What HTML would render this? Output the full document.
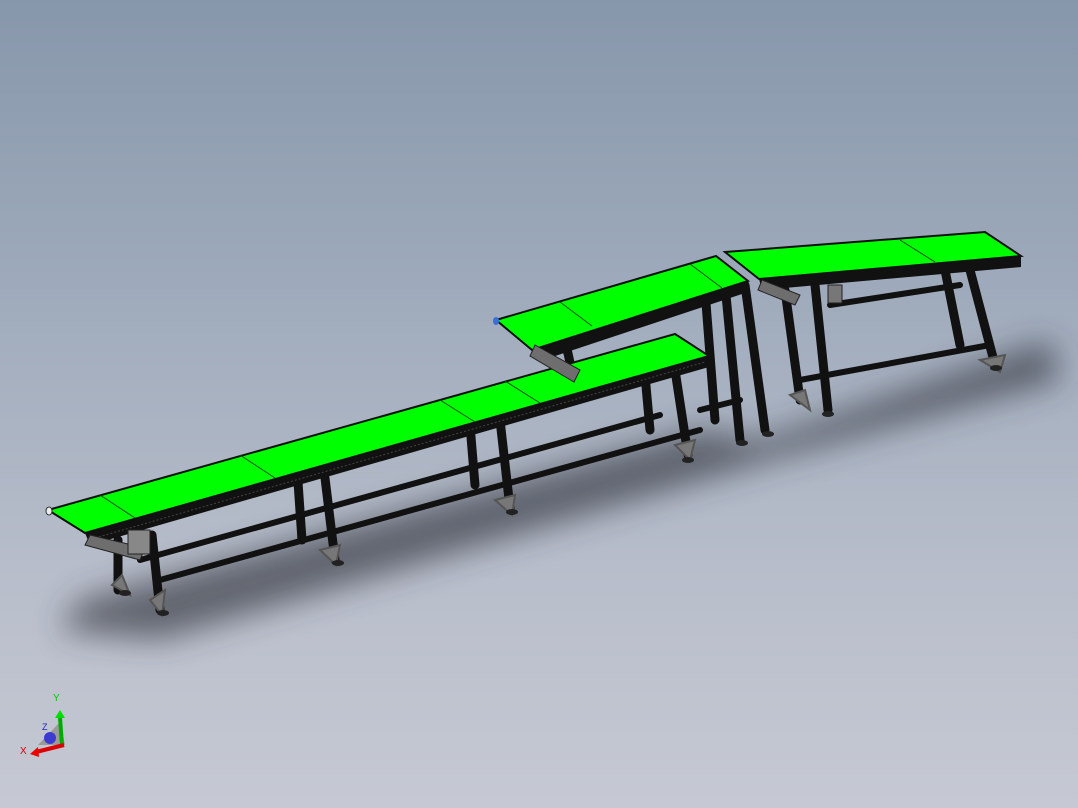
<!DOCTYPE html>
<html><head><meta charset="utf-8"><style>
html,body{margin:0;padding:0;width:1078px;height:808px;overflow:hidden}
body{background:linear-gradient(180deg,#8797ab 0%,#9eaabb 35%,#b7bdca 70%,#c6c9d3 100%)}
</style></head><body>
<svg width="1078" height="808" viewBox="0 0 1078 808" xmlns="http://www.w3.org/2000/svg">
<defs><filter id="b" x="-20%" y="-50%" width="140%" height="200%"><feGaussianBlur stdDeviation="16"/></filter></defs>
<polygon points="80,600 700,430 760,440 1050,340 1060,380 770,460 160,640 60,630" fill="#30343c" opacity="0.65" filter="url(#b)"/>
<g stroke="#111" stroke-linecap="round" fill="none">
<g stroke-width="9">
<line x1="118" y1="540" x2="118" y2="590"/><line x1="152" y1="535" x2="160" y2="610"/>
<line x1="298" y1="482" x2="302" y2="540"/><line x1="325" y1="478" x2="335" y2="560"/>
<line x1="470" y1="425" x2="475" y2="485"/><line x1="500" y1="420" x2="510" y2="508"/>
<line x1="645" y1="375" x2="650" y2="430"/><line x1="675" y1="370" x2="688" y2="455"/>
<line x1="565" y1="340" x2="575" y2="385"/>
<line x1="705" y1="290" x2="715" y2="420"/><line x1="725" y1="285" x2="740" y2="440"/><line x1="745" y1="285" x2="765" y2="430"/>
<line x1="785" y1="290" x2="800" y2="400"/><line x1="815" y1="285" x2="828" y2="410"/>
<line x1="945" y1="270" x2="960" y2="345"/><line x1="970" y1="270" x2="995" y2="365"/>
</g>
<g stroke-width="6">
<line x1="160" y1="580" x2="700" y2="430"/><line x1="140" y1="560" x2="660" y2="415"/>
<line x1="800" y1="380" x2="990" y2="345"/><line x1="830" y1="305" x2="960" y2="285"/>
<line x1="700" y1="410" x2="740" y2="400"/>
</g>
<g stroke-width="2" stroke="#555" fill="#777">
<polygon points="112,585 122,575 130,595"/><polygon points="150,600 165,590 162,615"/>
<polygon points="320,550 340,545 336,565"/><polygon points="495,500 515,495 512,515"/>
<polygon points="675,445 695,440 690,460"/><polygon points="790,395 805,390 810,410"/>
<polygon points="980,360 1005,355 1000,372"/>
</g>
</g>
<g fill="#222"><ellipse cx="125" cy="593" rx="6" ry="3"/><ellipse cx="163" cy="613" rx="6" ry="3"/><ellipse cx="338" cy="563" rx="6" ry="3"/><ellipse cx="512" cy="512" rx="6" ry="3"/><ellipse cx="688" cy="460" rx="6" ry="3"/><ellipse cx="742" cy="443" rx="6" ry="3"/><ellipse cx="768" cy="434" rx="6" ry="3"/><ellipse cx="828" cy="414" rx="6" ry="3"/><ellipse cx="996" cy="368" rx="6" ry="3"/></g>
<polygon points="85,533 709,356 709,367 90,545" fill="#111"/>
<line x1="95" y1="538" x2="705" y2="362" stroke="#444" stroke-width="1" stroke-dasharray="2 2"/>
<polygon points="48,510 675,334 709,356 85,533" fill="#00ff00" stroke="#111" stroke-width="2"/>
<g stroke="#0a4d0a" stroke-width="1"><line x1="100" y1="495" x2="135" y2="518"/><line x1="240" y1="455" x2="275" y2="478"/><line x1="440" y1="400" x2="475" y2="422"/><line x1="505" y1="381" x2="540" y2="403"/></g>
<ellipse cx="49" cy="511" rx="3" ry="4" fill="#eee" stroke="#333"/>
<polygon points="90,535 145,548 140,560 85,545" fill="#6e6e6e" stroke="#222"/>
<rect x="128" y="530" width="22" height="24" fill="#888" stroke="#222"/>
<polygon points="532,350 748,281 748,292 540,361" fill="#111"/>
<polygon points="496,320 716,256 748,281 532,350" fill="#00ff00" stroke="#111" stroke-width="2"/>
<g stroke="#0a4d0a"><line x1="560" y1="302" x2="592" y2="326"/><line x1="690" y1="264" x2="722" y2="288"/></g>
<ellipse cx="496" cy="321" rx="3" ry="4" fill="#3b6fd8"/>
<polygon points="535,345 580,370 574,382 530,356" fill="#6e6e6e" stroke="#222"/>
<polygon points="759,279 1021,256 1021,267 762,290" fill="#111"/>
<polygon points="725,252 985,232 1021,256 759,279" fill="#00ff00" stroke="#111" stroke-width="2"/>
<g stroke="#0a4d0a"><line x1="900" y1="240" x2="935" y2="262"/></g>
<polygon points="762,280 800,295 795,305 758,290" fill="#6e6e6e" stroke="#222"/>
<rect x="828" y="285" width="14" height="18" fill="#777" stroke="#222"/>
<polygon points="60,722 38,745 65,745" fill="#9a9a9a"/>
<circle cx="50" cy="738" r="6" fill="#3b3bd0"/>
<line x1="62" y1="745" x2="60" y2="718" stroke="#0a0" stroke-width="4"/>
<polygon points="55,718 60,710 65,718" fill="#0d0"/>
<line x1="64" y1="745" x2="36" y2="752" stroke="#d00" stroke-width="4"/>
<polygon points="38,747 30,754 39,757" fill="#e00"/>
<text x="53" y="701" font-family="Liberation Sans,sans-serif" font-size="10" fill="#0c0">Y</text>
<text x="42" y="730" font-family="Liberation Sans,sans-serif" font-size="9" fill="#22b">Z</text>
<text x="20" y="754" font-family="Liberation Sans,sans-serif" font-size="10" fill="#d00">X</text>
</svg>
</body></html>
